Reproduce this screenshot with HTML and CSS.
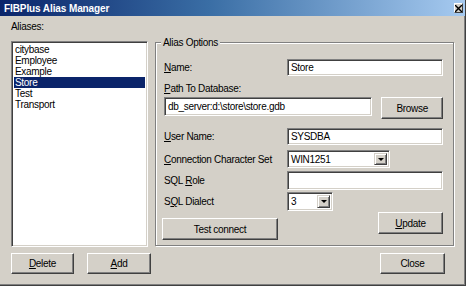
FILE: index.html
```html
<!DOCTYPE html>
<html>
<head>
<meta charset="utf-8">
<link rel="stylesheet" href="styles.css">
</head>
<body>
<div class="window">
  <div class="titlebar">
    <span class="title">FIBPlus Alias Manager</span>
    <span class="close-x"><svg width="7" height="7" viewBox="0 0 7 7"><path d="M0 0L7 7M7 0L0 7" stroke="#000" stroke-width="1.4"/></svg></span>
  </div>
  <div class="client">
    <div class="left">
      <div class="aliases">Aliases:</div>
      <div class="listbox">
        <div class="item">citybase</div>
        <div class="item">Employee</div>
        <div class="item">Example</div>
        <div class="item selected">Store</div>
        <div class="item">Test</div>
        <div class="item">Transport</div>
      </div>
      <div class="btnrow">
        <button class="btn btn-delete"><u>D</u>elete</button>
        <button class="btn btn-add"><u>A</u>dd</button>
      </div>
    </div>
    <div class="right">
      <div class="group">
        <div class="legend">Alias Options</div>
        <div class="row r-name">
          <div class="lab"><u>N</u>ame:</div>
          <div class="field f-wide">Store</div>
        </div>
        <div class="pathlabel"><u>P</u>ath To Database:</div>
        <div class="row r-path">
          <div class="field f-path">db_server:d:\store\store.gdb</div>
          <button class="btn btn-browse">Browse</button>
        </div>
        <div class="row r-user">
          <div class="lab"><u>U</u>ser Name:</div>
          <div class="field f-wide">SYSDBA</div>
        </div>
        <div class="row r-charset">
          <div class="lab"><u>C</u>onnection Character Set</div>
          <div class="field combo c-charset"><span class="ctext">WIN1251</span><span class="arrow"><i></i></span></div>
        </div>
        <div class="row r-role">
          <div class="lab">SQL <u>R</u>ole</div>
          <div class="field f-wide"></div>
        </div>
        <div class="row r-dialect">
          <div class="lab">S<u>Q</u>L Dialect</div>
          <div class="field combo c-dialect"><span class="ctext">3</span><span class="arrow"><i></i></span></div>
        </div>
        <div class="row r-buttons">
          <button class="btn btn-test">Test connect</button>
          <button class="btn btn-update"><u>U</u>pdate</button>
        </div>
      </div>
      <button class="btn btn-close">Close</button>
    </div>
  </div>
</div>
</body>
</html>
```
FILE: styles.css
```css
html, body {
  margin: 0;
  padding: 0;
  background: #d4d0c8;
}
body {
  font-family: "Liberation Sans", Arial, sans-serif;
  font-size: 10px;
  letter-spacing: -0.3px;
  color: #000;
}
u { text-decoration: underline; text-underline-offset: 1px; }

.window {
  width: 466px;
  height: 286px;
  box-sizing: border-box;
  background: #d4d0c8;
  border-right: 1px solid #404040;
  border-bottom: 1px solid #404040;
  box-shadow: inset -1px -1px #808080;
  display: flex;
  flex-direction: column;
  overflow: hidden;
}

.titlebar {
  flex: none;
  height: 16px;
  box-sizing: border-box;
  background: linear-gradient(to right, #0a246a 0%, #3a6ea5 45%, #a6caf0 100%);
  display: flex;
  align-items: center;
  justify-content: space-between;
  padding: 0 2px 0 4px;
}
.title {
  color: #fff;
  font-weight: bold;
  font-size: 10px;
  letter-spacing: -0.1px;
}
.close-x {
  width: 9px;
  height: 10px;
  box-sizing: border-box;
  background: #d4d0c8;
  border: 1px solid;
  border-color: #fff #404040 #404040 #fff;
  display: flex;
  align-items: center;
  justify-content: center;
}

.client {
  flex: 1;
  display: flex;
  padding: 5px 0 0 11px;
}

.left {
  width: 140px;
  display: flex;
  flex-direction: column;
}
.aliases {
  height: 12px;
  line-height: 12px;
}
.listbox {
  margin-top: 8px;
  width: 137px;
  height: 206px;
  box-sizing: border-box;
  background: #fff;
  border: 1px solid;
  border-color: #808080 #fff #fff #808080;
  box-shadow: inset 1px 1px #404040, inset -1px -1px #d4d0c8;
  padding: 2px 2px 0 2px;
}
.item {
  height: 11px;
  line-height: 11px;
  padding-left: 1px;
  white-space: nowrap;
}
.item.selected {
  background: #0a246a;
  color: #fff;
}

.btn {
  font-family: inherit;
  font-size: 10px;
  letter-spacing: -0.3px;
  color: #000;
  background: #d4d0c8;
  border: 1px solid;
  border-color: #fff #404040 #404040 #fff;
  box-shadow: inset -1px -1px #808080;
  padding: 0;
  margin: 0;
  box-sizing: border-box;
  display: flex;
  align-items: center;
  justify-content: center;
}
.btnrow {
  margin-top: 6px;
  display: flex;
  gap: 13px;
}
.btn-delete { width: 63px; height: 21px; }
.btn-add { width: 64px; height: 21px; }

.right {
  margin-left: 4px;
  margin-top: 21px;
  width: 300px;
  display: flex;
  flex-direction: column;
}
.group {
  position: relative;
  width: 299px;
  height: 204px;
  box-sizing: border-box;
  border: 1px solid #808080;
  box-shadow: inset 1px 1px #fff, 1px 1px #fff;
  padding: 16px 10px 0 8px;
  display: flex;
  flex-direction: column;
}
.legend {
  position: absolute;
  top: -6px;
  left: 5px;
  padding: 0 2px;
  background: #d4d0c8;
  line-height: 12px;
}
.row {
  display: flex;
  align-items: center;
}
.lab {
  width: 123px;
  flex: none;
  white-space: nowrap;
}
.field {
  box-sizing: border-box;
  background: #fff;
  border: 1px solid;
  border-color: #808080 #fff #fff #808080;
  box-shadow: inset 1px 1px #404040, inset -1px -1px #d4d0c8;
  padding-left: 3px;
  display: flex;
  align-items: center;
  white-space: nowrap;
  overflow: hidden;
}
.r-name { height: 17px; }
.r-name .field { width: 157px; height: 17px; }
.pathlabel {
  margin-top: 7px;
  height: 12px;
  line-height: 12px;
}
.r-path {
  margin-top: 2px;
  height: 22px;
  align-items: flex-start;
}
.f-path { width: 210px; height: 19px; }
.btn-browse { margin-left: 9px; width: 62px; height: 22px; }
.r-user { margin-top: 9px; height: 17px; }
.r-user .field { width: 157px; height: 17px; }
.r-charset { margin-top: 5px; height: 18px; }
.r-role { margin-top: 3px; height: 19px; }
.r-role .field { width: 157px; height: 19px; }
.r-dialect { margin-top: 2px; height: 19px; }

.combo {
  padding: 2px 2px 2px 3px;
  justify-content: space-between;
}
.c-charset { width: 103px; height: 18px; }
.c-dialect { width: 46px; height: 19px; }
.ctext { flex: 1; }
.arrow {
  flex: none;
  width: 13px;
  align-self: stretch;
  box-sizing: border-box;
  background: #d4d0c8;
  border: 1px solid;
  border-color: #d4d0c8 #404040 #404040 #d4d0c8;
  box-shadow: inset 1px 1px #fff, inset -1px -1px #808080;
  display: flex;
  align-items: center;
  justify-content: center;
}
.arrow i {
  width: 0;
  height: 0;
  border-left: 3px solid transparent;
  border-right: 3px solid transparent;
  border-top: 3px solid #000;
}

.r-buttons {
  margin-top: 1px;
  height: 28px;
  align-items: flex-start;
  justify-content: space-between;
}
.btn-test {
  margin-top: 6px;
  margin-left: -2px;
  width: 116px;
  height: 22px;
}
.btn-update { width: 65px; height: 22px; }

.btn-close {
  margin-top: 7px;
  align-self: flex-end;
  margin-right: 10px;
  width: 65px;
  height: 21px;
}
```
